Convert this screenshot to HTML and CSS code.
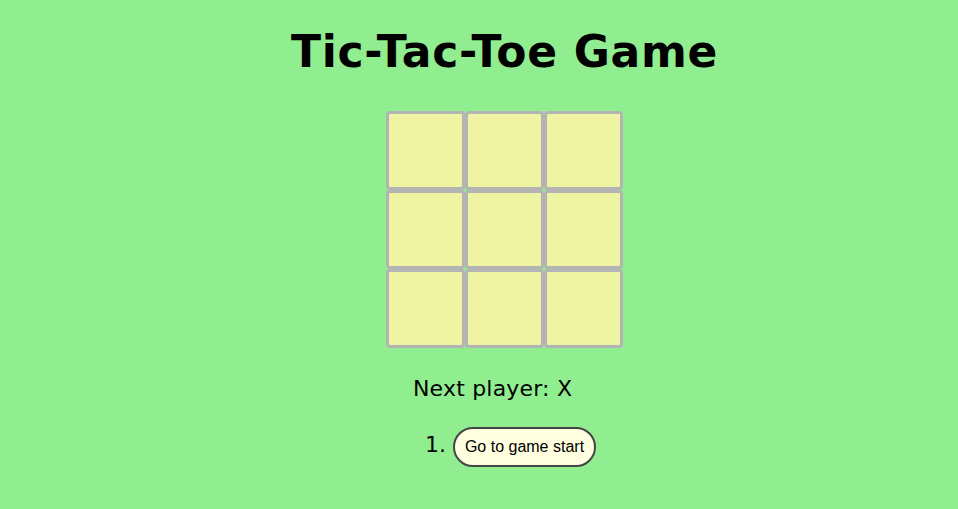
FILE: index.html
```html
<!DOCTYPE html>
<html>
<head>
<meta charset="utf-8">
<title>Tic-Tac-Toe Game</title>
<link rel="stylesheet" href="styles.css">
</head>
<body>
<main class="app">
  <h1 class="title">Tic-Tac-Toe Game</h1>
  <div class="board">
    <button class="square"></button>
    <button class="square"></button>
    <button class="square"></button>
    <button class="square"></button>
    <button class="square"></button>
    <button class="square"></button>
    <button class="square"></button>
    <button class="square"></button>
    <button class="square"></button>
  </div>
  <div class="info">
    <div class="status">Next player: X</div>
    <ol class="moves">
      <li class="move"><button class="move-btn">Go to game start</button></li>
    </ol>
  </div>
</main>
</body>
</html>
```
FILE: styles.css
```css
html, body {
  margin: 0;
  padding: 0;
  background: #90ee90;
}
body {
  font-family: "DejaVu Sans", sans-serif;
  color: #000;
}
.app {
  display: flex;
  flex-direction: column;
  align-items: center;
  padding-left: 51px;
}
.title {
  margin: 26px 0 0 0;
  font-size: 44px;
  line-height: 52px;
  font-weight: bold;
  letter-spacing: 0.7px;
}
.board {
  margin-top: 33px;
  display: grid;
  grid-template-columns: repeat(3, 79px);
  grid-template-rows: repeat(3, 79px);
}
.square {
  box-sizing: border-box;
  width: 79px;
  height: 79px;
  margin: 0;
  padding: 0;
  border: 3px solid #b4b4b4;
  border-radius: 4px;
  background: #eef4a2;
}
.info {
  margin-top: 28px;
}
.status {
  font-size: 22px;
  line-height: 26px;
  letter-spacing: 0.2px;
}
.moves {
  margin: 25px 0 0 0;
  padding-left: 40px;
  font-size: 22px;
}
.move-btn {
  font-family: "Liberation Sans", Arial, sans-serif;
  font-size: 16px;
  line-height: 18px;
  padding: 9px 10px;
  border: 2px solid #444;
  border-radius: 20px;
  background: #ffffe0;
  color: #000;
}
```
